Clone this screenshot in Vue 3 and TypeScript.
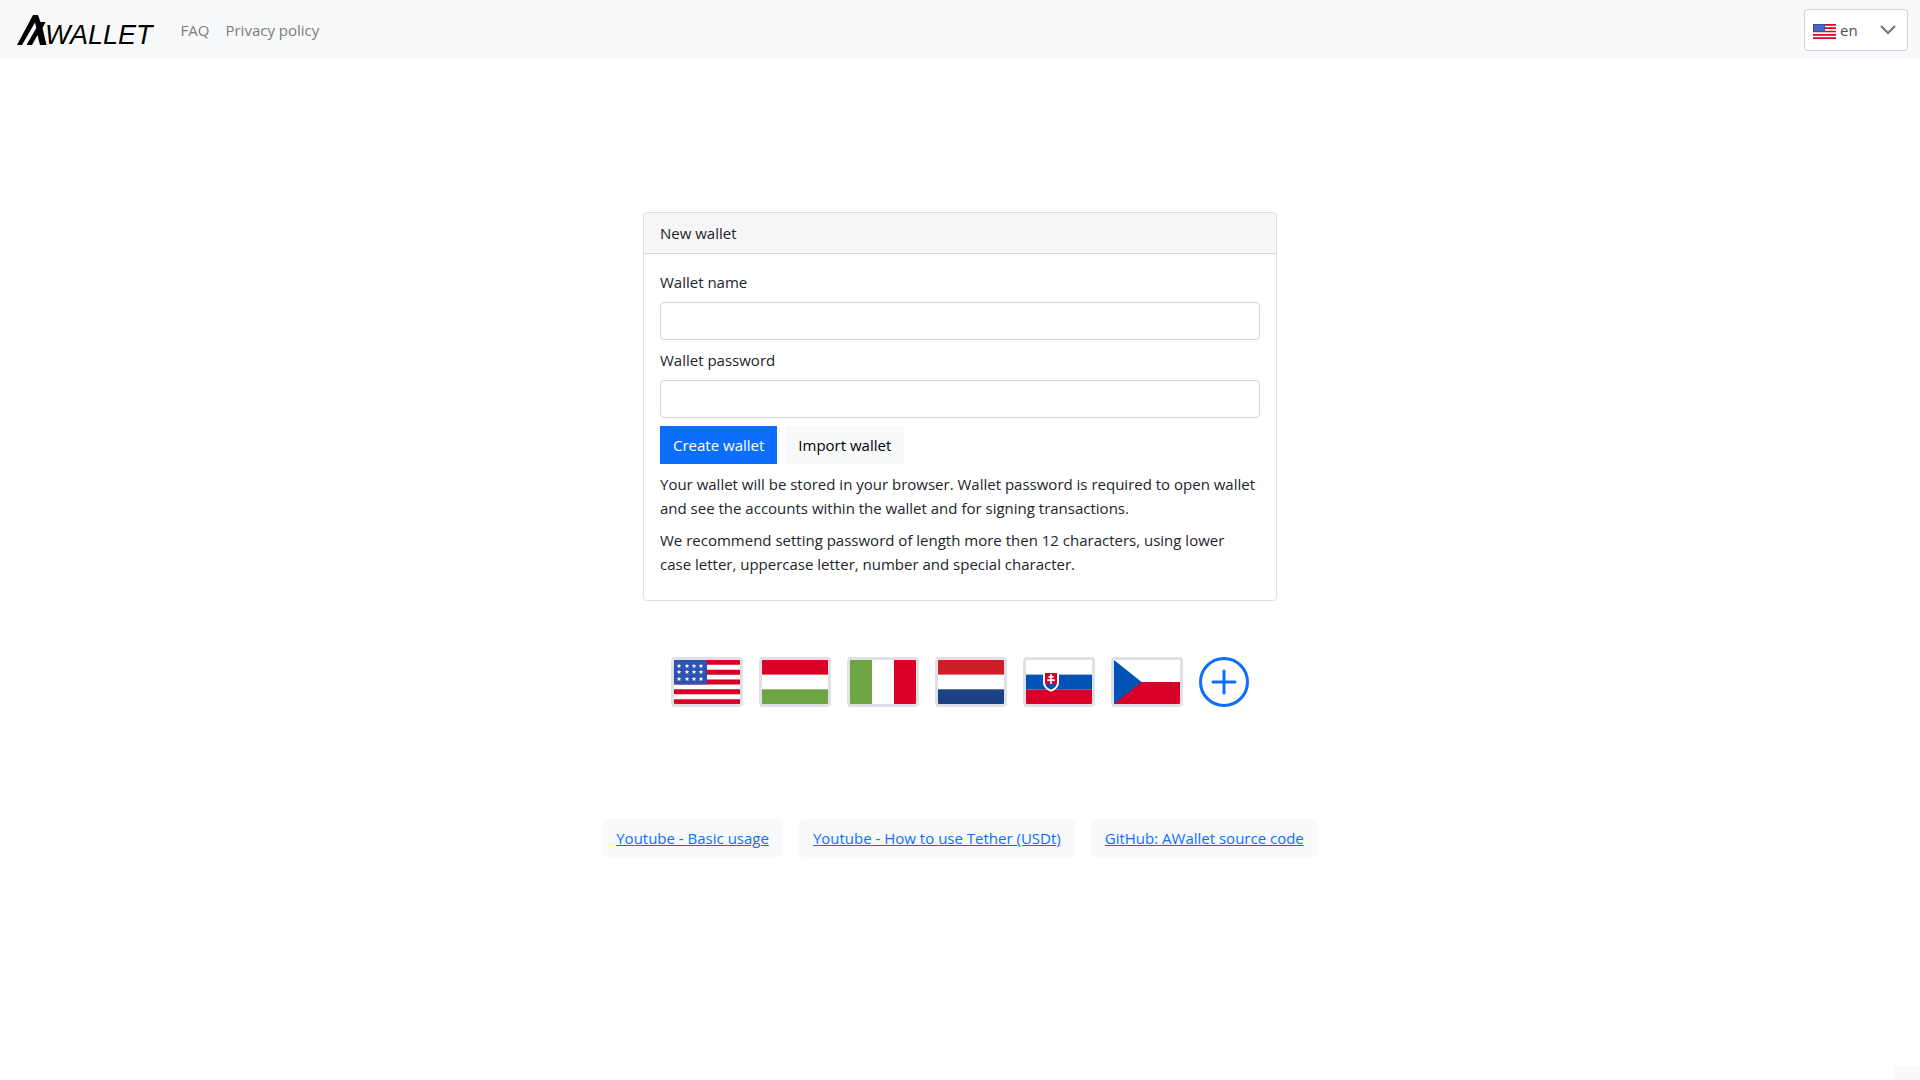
<script setup lang="ts">
import { ref } from 'vue'

type FlagCode = 'us' | 'hu' | 'it' | 'nl' | 'sk' | 'cz'

interface Language {
  code: FlagCode
  name: string
}

interface ResourceLink {
  label: string
  href: string
}

const languages: Language[] = [
  { code: 'us', name: 'English' },
  { code: 'hu', name: 'Magyar' },
  { code: 'it', name: 'Italiano' },
  { code: 'nl', name: 'Nederlands' },
  { code: 'sk', name: 'Slovenčina' },
  { code: 'cz', name: 'Čeština' },
]

const links: ResourceLink[] = [
  { label: 'Youtube - Basic usage', href: '#basic-usage' },
  { label: 'Youtube - How to use Tether (USDt)', href: '#tether' },
  { label: 'GitHub: AWallet source code', href: '#source' },
]

const stars = [6, 12, 19].flatMap((y) => [5, 13, 20, 27].map((x) => ({ x, y })))

const locale = ref('en')
const walletName = ref('')
const walletPassword = ref('')
</script>

<template>
  <div class="page">
    <header class="navbar">
      <a class="brand" href="#home" aria-label="AWallet home">
        <svg class="brand-mark" viewBox="0 0 32 30" aria-hidden="true">
          <path d="M1 30 L17 0 H22 L24.500 7 H29.500 L26.500 13 L30.500 30 H24 L21.500 20 L16 30 H10.500 L20.300 13 L19 7.500 L6 30 Z" />
        </svg>
        <span class="brand-text">WALLET</span>
      </a>
      <nav class="nav">
        <a href="#faq">FAQ</a>
        <a href="#privacy">Privacy policy</a>
      </nav>
      <div class="locale">
        <svg class="locale-flag" viewBox="0 0 23 15" aria-hidden="true">
          <rect width="23" height="15" fill="#fff" />
          <path d="M0 .8H23M0 4.200H23M0 7.500H23M0 10.800H23M0 14.200H23" stroke="#d80027" stroke-width="1.700" />
          <rect width="12" height="8" fill="#2e52b2" />
          <path d="M1.500 2H11M1.500 4H11M1.500 6H11" stroke="#96a8d8" stroke-dasharray="1 1" />
        </svg>
        <select v-model="locale" aria-label="Language">
          <option value="en">en</option>
          <option value="hu">hu</option>
          <option value="sk">sk</option>
        </select>
        <svg class="locale-chevron" viewBox="0 0 16 10" aria-hidden="true">
          <path d="M1.500 1.500L8 8L14.500 1.500" fill="none" stroke="#6c757d" stroke-width="2" stroke-linecap="round" stroke-linejoin="round" />
        </svg>
      </div>
    </header>

    <main class="content">
      <form class="card" @submit.prevent>
        <h1 class="card-header">New wallet</h1>
        <div class="card-body">
          <label for="wallet-name">Wallet name</label>
          <input id="wallet-name" v-model="walletName" type="text" />
          <label for="wallet-password">Wallet password</label>
          <input id="wallet-password" v-model="walletPassword" type="password" />
          <div class="actions">
            <button class="btn btn-primary" type="submit">Create wallet</button>
            <button class="btn btn-light" type="button">Import wallet</button>
          </div>
          <p>
            Your wallet will be stored in your browser. Wallet password is required to open wallet
            and see the accounts within the wallet and for signing transactions.
          </p>
          <p>
            We recommend setting password of length more then 12 characters, using lower<br />
            case letter, uppercase letter, number and special character.
          </p>
        </div>
      </form>

      <div class="flags">
        <button v-for="lang in languages" :key="lang.code" class="flag" type="button" :aria-label="lang.name">
          <svg viewBox="0 0 66 44" aria-hidden="true">
            <rect width="66" height="44" fill="#fff" />
            <template v-if="lang.code === 'us'">
              <path d="M0 2.400H66M0 12.200H66M0 22H66M0 31.800H66M0 41.600H66" stroke="#d80027" stroke-width="4.900" />
              <rect width="33" height="24.400" fill="#2e52b2" />
              <path
                v-for="(star, i) in stars"
                :key="i"
                :transform="`translate(${star.x} ${star.y})`"
                d="M0-2.400L.6-.7L2.300-.7L1 .4L1.500 2.100L0 1.100L-1.500 2.100L-1 .4L-2.300-.7L-.6-.7Z"
                fill="#fff"
              />
            </template>
            <template v-else-if="lang.code === 'hu'">
              <rect width="66" height="14.600" fill="#d80027" />
              <rect y="29.300" width="66" height="14.700" fill="#6da544" />
            </template>
            <template v-else-if="lang.code === 'it'">
              <rect width="22" height="44" fill="#6da544" />
              <rect x="44" width="22" height="44" fill="#d80027" />
            </template>
            <template v-else-if="lang.code === 'nl'">
              <rect width="66" height="14.600" fill="#cd1f2a" />
              <rect y="29.300" width="66" height="14.700" fill="#1d4185" />
            </template>
            <template v-else-if="lang.code === 'sk'">
              <rect y="14.600" width="66" height="15" fill="#0052b4" />
              <rect y="29.600" width="66" height="14.400" fill="#d80027" />
              <path d="M17 12H33V22C33 27 29.500 30 25 31.700C20.500 30 17 27 17 22Z" fill="#fff" />
              <path d="M19 13H31V22C31 26 28 28.200 25 29.500C22 28.200 19 26 19 22Z" fill="#d80027" />
              <path d="M20 25.500C21 23.500 22.500 24 23 24.500C23.500 22.500 26.500 22.500 27 24.500C27.500 24 29 23.500 30 25.500C29 27.500 27 28.600 25 29.500C23 28.600 21 27.500 20 25.500Z" fill="#0052b4" />
              <path d="M25 14V24M22.500 16.800H27.500M21.200 20.200H28.800" stroke="#fff" stroke-width="1.700" />
            </template>
            <template v-else>
              <rect y="22" width="66" height="22" fill="#d80027" />
              <path d="M0 0L27.600 22L0 44Z" fill="#0052b4" />
            </template>
          </svg>
        </button>
        <button class="add" type="button" aria-label="Add language">
          <svg viewBox="0 0 50 50" fill="none" stroke="#0d6efd" stroke-width="3" stroke-linecap="round" aria-hidden="true">
            <circle cx="25" cy="25" r="23.500" />
            <path d="M25 14V36M14 25H36" />
          </svg>
        </button>
      </div>

      <div class="links">
        <a v-for="link in links" :key="link.href" class="btn btn-link" :href="link.href">{{ link.label }}</a>
      </div>
    </main>

    <div class="corner-chip" aria-hidden="true"></div>
  </div>
</template>

<style>
body {
  margin: 0;
  background: #fff;
}
</style>

<style scoped>
.page {
  min-height: 100vh;
  color: #212529;
  font-family: 'Open Sans', 'Noto Sans', sans-serif;
  font-size: 15px;
  line-height: 24px;
}

.page *,
.page *::before {
  box-sizing: border-box;
}

.navbar {
  display: flex;
  align-items: center;
  height: 59px;
  padding: 0 12px 0 16px;
  background: #f8f9fb;
}

.brand {
  display: flex;
  align-items: flex-end;
  height: 31px;
  color: #000;
  text-decoration: none;
}

.brand-mark {
  width: 32px;
  height: 30px;
}

.brand-text {
  height: 30px;
  margin-left: -3px;
  font-family: 'Liberation Sans', Arial, sans-serif;
  font-size: 27px;
  font-style: italic;
  line-height: 40px;
}

.nav {
  display: flex;
  gap: 16px;
  margin-left: 28px;
}

.nav a {
  color: #7b7c7d;
  text-decoration: none;
}

.locale {
  position: relative;
  margin-left: auto;
}

.locale select {
  display: block;
  width: 104px;
  height: 42px;
  padding: 0 32px 0 35px;
  appearance: none;
  border: 1px solid #ced4da;
  border-radius: 4px;
  background: #fff;
  color: #495057;
  font: inherit;
}

.locale-flag,
.locale-chevron {
  position: absolute;
  pointer-events: none;
}

.locale-flag {
  top: 15px;
  left: 9px;
  width: 23px;
  height: 15px;
}

.locale-chevron {
  top: 16px;
  right: 12px;
  width: 16px;
  height: 10px;
}

.content {
  display: flex;
  flex-direction: column;
  align-items: center;
  padding: 153px 16px 64px;
}

.card {
  width: 100%;
  max-width: 634px;
  border: 1px solid #dfdfdf;
  border-radius: 4px;
}

.card-header {
  margin: 0;
  padding: 8px 16px;
  border-bottom: 1px solid #d8d8d8;
  border-radius: 3px 3px 0 0;
  background: #f7f7f7;
  font-size: 15px;
  font-weight: 400;
  line-height: 24px;
}

.card-body {
  padding: 16px;
}

.card-body label {
  display: block;
  margin-bottom: 8px;
}

.card-body input {
  display: block;
  width: 100%;
  height: 38px;
  margin-bottom: 8px;
  padding: 6px 12px;
  border: 1px solid #ced4da;
  border-radius: 4px;
  background: #fff;
  font: inherit;
}

.card-body p {
  margin: 8px 0;
}

.actions {
  display: flex;
  gap: 8px;
}

.btn {
  height: 38px;
  padding: 7px 13px;
  border: 0;
  border-radius: 4px;
  background: #f8f9fb;
  color: #000;
  font: inherit;
  cursor: pointer;
}

.btn-primary {
  border-radius: 0;
  background: #0d6efd;
  color: #fff;
}

.btn-link {
  padding: 7px 14px;
  color: #0d6efd;
}

.flags {
  display: flex;
  flex-wrap: wrap;
  justify-content: center;
  gap: 16px;
  margin-top: 56px;
}

.flag,
.add {
  height: 50px;
  padding: 0;
  background: none;
  cursor: pointer;
}

.flag {
  width: 72px;
  overflow: hidden;
  border: 3px solid #dee2e6;
  border-radius: 4px;
}

.add {
  width: 50px;
  border: 0;
}

.flag svg,
.add svg {
  display: block;
  width: 100%;
  height: 100%;
}

.links {
  display: flex;
  flex-wrap: wrap;
  justify-content: center;
  gap: 16px;
  margin-top: 112px;
}

.corner-chip {
  position: fixed;
  right: 0;
  bottom: 0;
  width: 26px;
  height: 14px;
  border-radius: 4px;
  background: #f8f9fb;
}
</style>
